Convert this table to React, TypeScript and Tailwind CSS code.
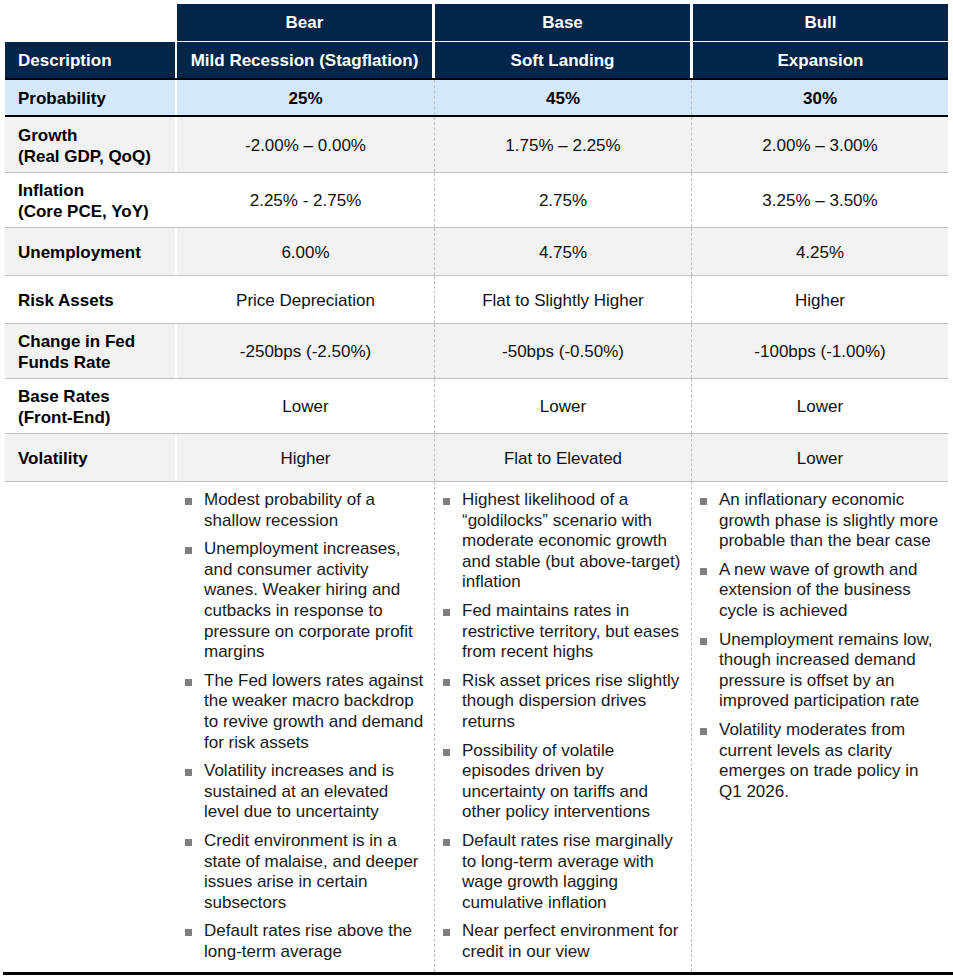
const NAVY = 'bg-[#022549]';

type Row = {
  label: string[];
  values: string[];
  gray: boolean;
  h: string;
};

const rows: Row[] = [
  { label: ['Growth', '(Real GDP, QoQ)'], values: ['-2.00% – 0.00%', '1.75% – 2.25%', '2.00% – 3.00%'], gray: true, h: 'h-[56px]' },
  { label: ['Inflation', '(Core PCE, YoY)'], values: ['2.25% - 2.75%', '2.75%', '3.25% – 3.50%'], gray: false, h: 'h-[55px]' },
  { label: ['Unemployment'], values: ['6.00%', '4.75%', '4.25%'], gray: true, h: 'h-[48px]' },
  { label: ['Risk Assets'], values: ['Price Depreciation', 'Flat to Slightly Higher', 'Higher'], gray: false, h: 'h-[48px]' },
  { label: ['Change in Fed', 'Funds Rate'], values: ['-250bps (-2.50%)', '-50bps (-0.50%)', '-100bps (-1.00%)'], gray: true, h: 'h-[55px]' },
  { label: ['Base Rates', '(Front-End)'], values: ['Lower', 'Lower', 'Lower'], gray: false, h: 'h-[55px]' },
  { label: ['Volatility'], values: ['Higher', 'Flat to Elevated', 'Lower'], gray: true, h: 'h-[48px]' },
];

const bullets: string[][] = [
  [
    'Modest probability of a shallow recession',
    'Unemployment increases, and consumer activity wanes. Weaker hiring and cutbacks in response to pressure on corporate profit margins',
    'The Fed lowers rates against the weaker macro backdrop to revive growth and demand for risk assets',
    'Volatility increases and is sustained at an elevated level due to uncertainty',
    'Credit environment is in a state of malaise, and deeper issues arise in certain subsectors',
    'Default rates rise above the long-term average',
  ],
  [
    'Highest likelihood of a \u201cgoldilocks\u201d scenario with moderate economic growth and stable (but above-target) inflation',
    'Fed maintains rates in restrictive territory, but eases from recent highs',
    'Risk asset prices rise slightly though dispersion drives returns',
    'Possibility of volatile episodes driven by uncertainty on tariffs and other policy interventions',
    'Default rates rise marginally to long-term average with wage growth lagging cumulative inflation',
    'Near perfect environment for credit in our view',
  ],
  [
    'An inflationary economic growth phase is slightly more probable than the bear case',
    'A new wave of growth and extension of the business cycle is achieved',
    'Unemployment remains low, though increased demand pressure is offset by an improved participation rate',
    'Volatility moderates from current levels as clarity emerges on trade policy in Q1 2026.',
  ],
];

const colCls = [
  'w-[259px] border-l-2 border-white',
  'w-[257px] border-l border-dashed border-[#bfbfbf]',
  'w-[257px] border-l border-dashed border-[#bfbfbf]',
];

function BulletList({ items }: { items: string[] }) {
  return (
    <ul className="flex flex-col gap-[8px]">
      {items.map((t, i) => (
        <li key={i} className="flex">
          <span className="mt-[8px] ml-[8px] mr-[12px] h-[7px] w-[7px] shrink-0 bg-[#7f7f7f]" />
          <span className="w-[221px]">{t}</span>
        </li>
      ))}
    </ul>
  );
}

export default function App() {
  return (
    <div
      className="w-[953px] h-[978px] bg-white text-[17px] text-[#111]"
      style={{ fontFamily: '"Liberation Sans", Arial, sans-serif' }}
    >
      <div className="ml-[5px] w-[943px] pt-[3px]">
        {/* Header row 1 */}
        <div className="flex h-[38px] pt-px font-bold text-white">
          <div className="w-[172px]" />
          <div className={`${NAVY} w-[255px] flex items-center justify-center`}>Bear</div>
          <div className={`${NAVY} ml-[3px] w-[255px] flex items-center justify-center`}>Base</div>
          <div className={`${NAVY} ml-[3px] w-[255px] flex items-center justify-center`}>Bull</div>
        </div>
        {/* Header row 2 */}
        <div className="mt-px flex h-[36px] font-bold text-white">
          <div className={`${NAVY} w-[170px] pl-[13px] pt-px flex items-center`}>Description</div>
          <div className={`${NAVY} ml-[2px] w-[255px] pt-px flex items-center justify-center`}>Mild Recession (Stagflation)</div>
          <div className={`${NAVY} ml-[3px] w-[255px] pt-px flex items-center justify-center`}>Soft Landing</div>
          <div className={`${NAVY} ml-[3px] w-[255px] pt-px flex items-center justify-center`}>Expansion</div>
        </div>
        <div className="h-[2px] bg-black" />
        {/* Probability */}
        <div className="flex h-[35px] bg-[#d5e8fb] font-bold text-black">
          <div className="w-[170px] pl-[13px] pt-[2px] flex items-center">Probability</div>
          {['25%', '45%', '30%'].map((v, i) => (
            <div key={i} className={`${colCls[i]} pt-[2px] flex items-center justify-center`}>{v}</div>
          ))}
        </div>
        <div className="h-[2px] bg-black" />
        {/* Data rows */}
        {rows.map((r, ri) => (
          <div
            key={ri}
            className={`flex ${r.h} border-b border-[#bfbfbf] ${r.gray ? 'bg-[#f2f2f2]' : 'bg-white'}`}
          >
            <div className="w-[170px] pl-[13px] pt-[2px] flex flex-col justify-center font-bold text-black leading-[21px]">
              {r.label.map((l, li) => (
                <span key={li}>{l}</span>
              ))}
            </div>
            {r.values.map((v, i) => (
              <div key={i} className={`${colCls[i]} pt-[2px] flex items-center justify-center`}>{v}</div>
            ))}
          </div>
        ))}
        {/* Commentary */}
        <div className="flex leading-[20.6px] text-[#1a1a1a]">
          <div className="w-[170px]" />
          {bullets.map((b, i) => (
            <div key={i} className={`${colCls[i]} pt-[8px] pb-[10px]`}>
              <BulletList items={b} />
            </div>
          ))}
        </div>
      </div>
      <div className="ml-[3px] h-[3px] w-[950px] bg-black" />
    </div>
  );
}
